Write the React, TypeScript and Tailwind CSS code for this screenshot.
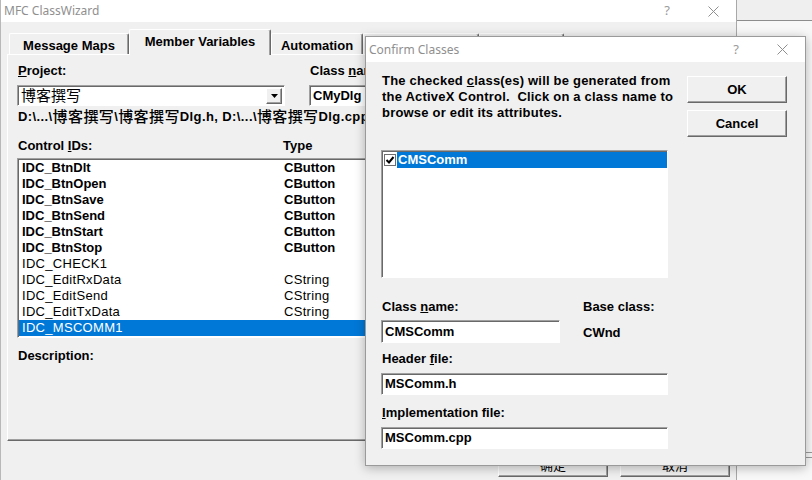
import React from 'react'

const ui = "font-['Liberation_Sans','Noto_Sans_CJK_SC',sans-serif]"
const cap = "font-['Noto_Sans','Noto_Sans_CJK_SC',sans-serif]"
const inset =
  'bg-white border border-t-[#a0a0a0] border-l-[#a0a0a0] border-r-white border-b-white shadow-[inset_1px_1px_0_#696969]'
const raised =
  'bg-[#f0f0f0] border border-t-white border-l-white border-r-[#696969] border-b-[#696969] shadow-[inset_-1px_-1px_0_#a0a0a0]'

const controls: { id: string; type: string; bold: boolean }[] = [
  { id: 'IDC_BtnDlt', type: 'CButton', bold: true },
  { id: 'IDC_BtnOpen', type: 'CButton', bold: true },
  { id: 'IDC_BtnSave', type: 'CButton', bold: true },
  { id: 'IDC_BtnSend', type: 'CButton', bold: true },
  { id: 'IDC_BtnStart', type: 'CButton', bold: true },
  { id: 'IDC_BtnStop', type: 'CButton', bold: true },
  { id: 'IDC_CHECK1', type: '', bold: false },
  { id: 'IDC_EditRxData', type: 'CString', bold: false },
  { id: 'IDC_EditSend', type: 'CString', bold: false },
  { id: 'IDC_EditTxData', type: 'CString', bold: false },
  { id: 'IDC_MSCOMM1', type: '', bold: false },
]

// the last two tabs sit under the Confirm Classes dialog, only their tops show
const tabs = [
  { label: 'Message Maps', w: 'w-[120px]' },
  { label: 'Member Variables', w: 'w-[142px]', active: true },
  { label: 'Automation', w: 'w-[92px]' },
  { label: '', w: 'w-[116px]' },
  { label: '', w: 'w-[85px]' },
]

function Caption({ title }: { title: string }) {
  return (
    <div className="flex items-center h-full">
      <span className={`${cap} text-[12px] text-[#8f8f8f] pl-[3px]`}>{title}</span>
      <div className="ml-auto flex h-full">
        <div className={`${cap} w-[46px] grid place-items-center text-[13px] text-[#9a9a9a]`}>?</div>
        <div className="w-[46px] grid place-items-center">
          <svg width="11" height="11" viewBox="0 0 11 11">
            <path d="M0.5 0.5L10.5 10.5M10.5 0.5L0.5 10.5" stroke="#8f8f8f" strokeWidth="1" />
          </svg>
        </div>
      </div>
    </div>
  )
}

function ClassWizard() {
  return (
    <div className="absolute left-0 top-0 w-[737px] h-[480px] bg-[#f0f0f0] border-r border-[#a8a8a8] border-l border-l-[#b8b8b8]">
      <div className="h-[22px] bg-white">
        <Caption title="MFC ClassWizard" />
      </div>

      <div className="flex items-end h-[32px] pl-[8px]">
        {tabs.map((t, i) => (
          <div
            key={i}
            className={`${t.w} ${
              t.active ? 'h-[26px] -mb-px z-10 bg-[#f0f0f0]' : 'h-[21px]'
            } flex items-start justify-center pt-[4px] border-t border-l border-t-white border-l-white border-r border-r-[#696969] rounded-t-[2px] shadow-[inset_-1px_0_0_#a0a0a0]`}
          >
            <span className={`${ui} font-bold text-[13px] leading-[16px] text-black`}>{t.label}</span>
          </div>
        ))}
      </div>

      <div className="relative ml-[6px] h-[387px] border-t border-l border-t-white border-l-white border-b border-b-[#696969] shadow-[inset_0_-1px_0_#a0a0a0] pl-[9px] pt-[8px]">
        <div className={`${ui} font-bold text-[13px] leading-[16px] text-black`}>
          <div className="flex">
            <div className="w-[292px] pl-px">
              <u>P</u>roject:
            </div>
            <div className="pl-px">
              Class <u>n</u>ame:
            </div>
          </div>

          <div className="flex mt-[6px]">
            <div className={`${inset} w-[268px] h-[21px] flex items-center pl-[3px] pr-[2px]`}>
              <span className="font-normal text-[15px] leading-[17px]">博客撰写</span>
              <div className={`${raised} ml-auto w-[16px] h-[16px] grid place-items-center`}>
                <svg width="7" height="4" viewBox="0 0 7 4">
                  <path d="M0 0H7L3.5 4Z" fill="#000" />
                </svg>
              </div>
            </div>
            <div className={`${inset} ml-[24px] w-[120px] h-[21px] flex items-center pl-[3px]`}>CMyDlg</div>
          </div>

          <div className="mt-[3px] h-[16px] pl-px flex items-center whitespace-nowrap tracking-[0.4px] overflow-visible">
            D:\...\<span className="font-medium text-[15px] leading-[16px]">博客撰写</span>\
            <span className="font-medium text-[15px] leading-[16px]">博客撰写</span>Dlg.h, D:\...\
            <span className="font-medium text-[15px] leading-[16px]">博客撰写</span>Dlg.cpp
          </div>

          <div className="flex mt-[13px]">
            <div className="w-[266px] pl-px">
              Control <u>I</u>Ds:
            </div>
            <div>Type</div>
          </div>

          <div className={`${inset} mt-[4px] w-[380px] h-[180px] pt-[1px] pl-px`}>
            {controls.map((c, i) => {
              const sel = i === controls.length - 1
              return (
                <div
                  key={c.id}
                  className={`flex h-[16px] items-center pl-[3px] ${sel ? 'bg-[#0078d7] text-white' : 'text-black'} ${
                    c.bold ? 'font-bold' : 'font-normal tracking-[0.3px]'
                  }`}
                >
                  <div className="w-[262px]">{c.id}</div>
                  <div>{c.type}</div>
                </div>
              )
            })}
          </div>

          <div className="mt-[10px] pl-px">Description:</div>
        </div>
      </div>

      <div className={`${ui} flex justify-end gap-[12px] pr-[6px] pt-[13px] text-[13px]`}>
        <div className={`${raised} w-[110px] h-[23px] grid place-items-center`}>确定</div>
        <div className={`${raised} w-[110px] h-[23px] grid place-items-center`}>取消</div>
      </div>
    </div>
  )
}

function ConfirmClasses() {
  return (
    <div className="absolute left-[365px] top-[36px] w-[441px] h-[430px] bg-[#f0f0f0] border border-[#9a9a9a] shadow-[0_2px_10px_rgba(0,0,0,0.28)]">
      <div className="h-[25px] bg-white">
        <Caption title="Confirm Classes" />
      </div>

      <div className={`${ui} flex pl-[15px] pt-[11px] font-bold text-[13px] leading-[16px] text-black`}>
        <div className="w-[287px]">
          <div className="pl-px whitespace-nowrap tracking-[0.2px]">
            The checked <u>c</u>lass(es) will be generated from
            <br />
            the ActiveX Control.&nbsp; Click on a class name to
            <br />
            browse or edit its attributes.
          </div>

          <div className={`${inset} mt-[29px] h-[128px] pt-px pl-px`}>
            <div className="flex h-[16px] items-center">
              <div className="w-[12px] h-[12px] ml-px mr-px border border-[#6d6d6d] bg-white grid place-items-center">
                <svg width="10" height="10" viewBox="0 0 10 10">
                  <path d="M1.5 5L4 7.5L8.5 2" stroke="#000" strokeWidth="2" fill="none" />
                </svg>
              </div>
              <div className="flex-1 h-[16px] bg-[#0078d7] text-white pl-px flex items-center">CMSComm</div>
            </div>
          </div>

          <div className="flex mt-[21px]">
            <div className="w-[202px] pl-px">
              Class <u>n</u>ame:
            </div>
            <div>Base class:</div>
          </div>
          <div className="flex items-center mt-[5px]">
            <div className={`${inset} w-[179px] h-[23px] flex items-center pl-[3px]`}>CMSComm</div>
            <div className="ml-[23px] pt-[2px]">CWnd</div>
          </div>

          <div className="mt-[8px] pl-px">
            Header <u>f</u>ile:
          </div>
          <div className={`${inset} mt-[6px] h-[22px] flex items-center pl-[3px]`}>MSComm.h</div>

          <div className="mt-[10px] pl-px">
            <u>I</u>mplementation file:
          </div>
          <div className={`${inset} mt-[6px] h-[22px] flex items-center pl-[3px]`}>MSComm.cpp</div>
        </div>

        <div className="ml-[19px] pt-[3px] flex flex-col gap-[7px]">
          <div className={`${raised} w-[100px] h-[27px] grid place-items-center`}>OK</div>
          <div className={`${raised} w-[100px] h-[27px] grid place-items-center`}>Cancel</div>
        </div>
      </div>
    </div>
  )
}

export default function App() {
  return (
    <div className="relative w-[812px] h-[480px] overflow-hidden bg-[#f8f8f8]">
      <div className="h-[21px] bg-[#efefef] border-b border-[#8d8d8d]" />
      <div className="absolute left-[737px] right-0 top-[452px] h-[6px] border-t border-b border-[#9a9a9a]" />
      <ClassWizard />
      <ConfirmClasses />
    </div>
  )
}
